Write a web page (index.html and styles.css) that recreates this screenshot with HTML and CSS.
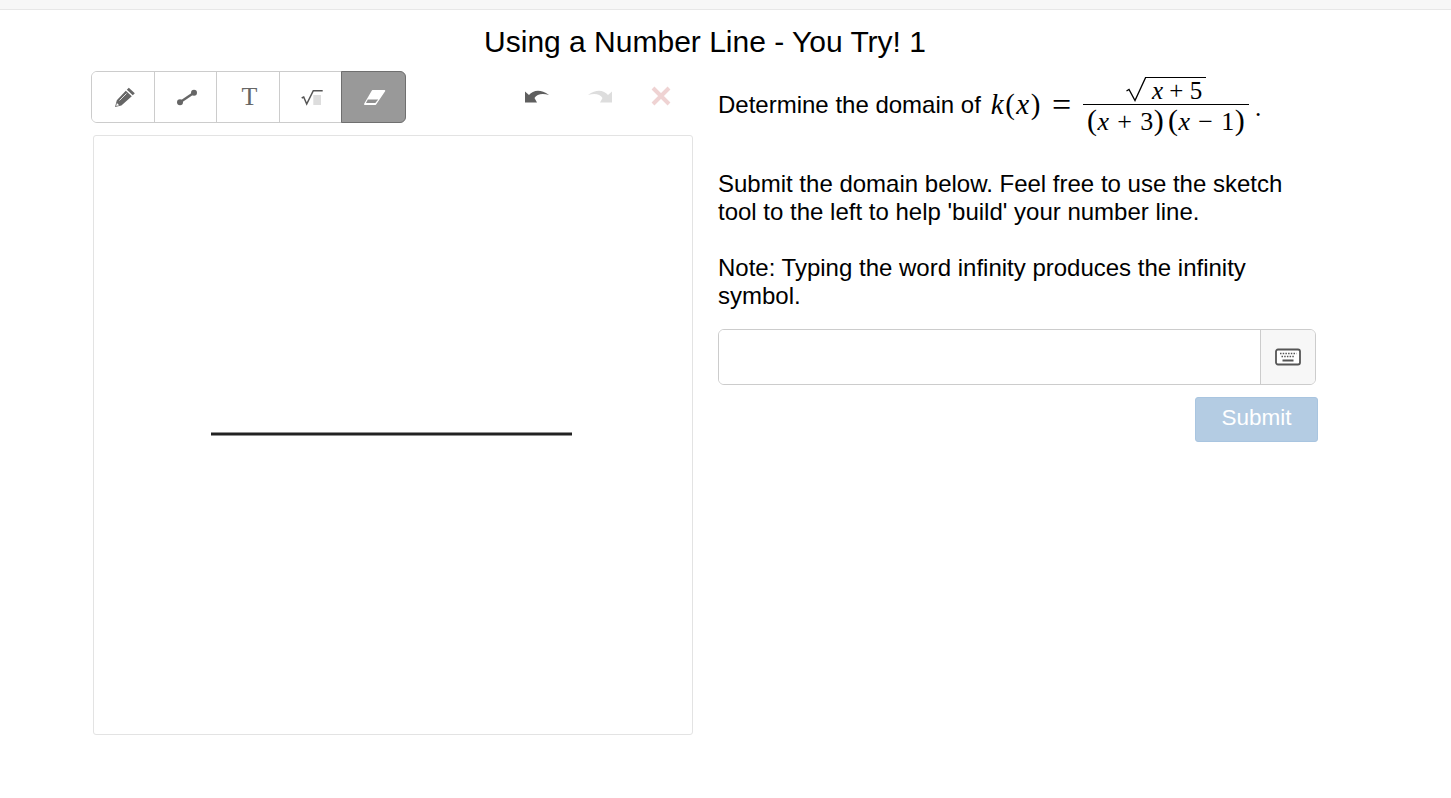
FILE: index.html
```html
<!DOCTYPE html>
<html lang="en">
<head>
<meta charset="utf-8">
<title>Using a Number Line - You Try! 1</title>
<link rel="stylesheet" href="styles.css">
</head>
<body>
<div class="topbar"></div>
<main class="page">
  <h1 class="title">Using a Number Line - You Try! 1</h1>
  <div class="columns">
    <section class="left">
      <div class="toolrow">
        <div class="tools">
          <button class="tool"><svg width="24" height="24" viewBox="0 0 24 24"><path fill="#666" d="M15.800 2.700 L21.800 8.300 L19.800 10.300 L13.800 4.700 Z M12.800 5.700 L18.800 11.300 L8.400 20.500 L2 22 L3.800 15.300 Z"/><path fill="#fff" d="M3.900 18 L6.200 20.300 L3.200 21 Z"/><path stroke="#fff" stroke-width=".8" d="M6.500 15.500 L13.500 8.500"/></svg></button>
          <button class="tool"><svg width="24" height="24" viewBox="0 0 24 24"><path stroke="#666" stroke-width="2.300" d="M5 17.300 L19 7.700"/><circle cx="5" cy="17.300" r="3" fill="#666"/><circle cx="19" cy="7.700" r="3" fill="#666"/></svg></button>
          <button class="tool"><span class="tee">T</span></button>
          <button class="tool"><svg width="24" height="24" viewBox="0 0 24 24"><path fill="none" stroke="#555" stroke-width="1.500" d="M1.700 13 L3.700 12 L6.700 19 L13.300 5.700 L22.700 5.700"/><rect x="13.300" y="10" width="7.700" height="10" fill="#ddd"/></svg></button>
          <button class="tool active"><svg width="24" height="24" viewBox="0 0 24 24"><path fill="#fff" stroke="#fff" stroke-width="1.500" stroke-linejoin="round" d="M9.500 5.800 L21.500 5.800 L12.500 19.200 L1.800 19.200 Z"/><path fill="#8f8f8f" d="M4.800 14.500 L15.200 14.500 L12.300 18 L3 18 Z"/></svg></button>
        </div>
        <div class="actions">
          <svg class="arrow" width="24" height="15" viewBox="0 -1 24 15"><path fill="#5f5f5f" d="M0 1.500 L4 5 C8 0.500 15 -1.500 24 5 C18 3 12 3.500 9.500 8 L12 12.500 L0 12.500 Z"/></svg>
          <svg class="arrow redo" width="24" height="15" viewBox="0 -1 24 15"><path fill="#ddd" d="M0 1.500 L4 5 C8 0.500 15 -1.500 24 5 C18 3 12 3.500 9.500 8 L12 12.500 L0 12.500 Z"/></svg>
          <svg width="20" height="20" viewBox="0 0 20 20"><path stroke="#efd3d3" stroke-width="4" d="M2 2 L18 18 M18 2 L2 18"/></svg>
        </div>
      </div>
      <div class="canvas">
        <svg width="598" height="598" viewBox="0 0 598 598"><line x1="117" y1="298" x2="478" y2="298" stroke="#222" stroke-width="3"/></svg>
      </div>
    </section>
    <section class="right">
      <div class="question">
        <span>Determine the domain of</span>
        <span class="math">
          <span class="fn"><i>k</i><span class="paren">(</span><i>x</i><span class="paren">)</span></span>
          <span class="eq">=</span>
          <span class="frac">
            <span class="num"><svg class="radical" width="20" height="27" viewBox="0 0 20 27"><path fill="none" stroke="#000" stroke-width="1.300" d="M0.500 14 L3 12.500 L9 23.500 L19.600 0.500 L20 0.500"/></svg><span class="radicand"><i>x</i> + 5</span></span>
            <span class="den"><span class="paren">(</span><i>x</i> + 3<span class="paren">)</span><span class="paren second">(</span><i>x</i> − 1<span class="paren">)</span></span>
          </span>
          <span class="dot">.</span>
        </span>
      </div>
      <p class="para first">Submit the domain below. Feel free to use the sketch tool to the left to help 'build' your number line.</p>
      <p class="para">Note: Typing the word infinity produces the infinity symbol.</p>
      <div class="answer">
        <div class="field"></div>
        <div class="kbd"><svg width="26" height="18" viewBox="0 0 26 18"><rect x="1" y="1.500" width="24" height="15" rx="2" fill="#fff" stroke="#555" stroke-width="1.800"/><path stroke="#555" stroke-width="1.500" stroke-dasharray="1.500 1.200" d="M5 5.500 H21.500 M6.500 8.500 H20"/><path stroke="#555" stroke-width="2" d="M7.500 12.500 H18.500"/></svg></div>
      </div>
      <div class="submit-row"><button class="submit">Submit</button></div>
    </section>
  </div>
</main>
</body>
</html>
```
FILE: styles.css
```css
* { box-sizing: border-box; }
html, body { margin: 0; padding: 0; background: #fff; }
body { font-family: "Liberation Sans", Arial, sans-serif; color: #000; height: 798px; overflow: hidden; }
.topbar { height: 10px; background: #f7f7f7; border-bottom: 1px solid #e7e7e7; }
.page { width: 1228px; margin-left: 91px; }
.title { margin: 0; padding-top: 14px; height: 61px; font-size: 30px; line-height: 35px; font-weight: 400; text-align: center; }
.columns { display: flex; }
.left { width: 602px; }
.toolrow { display: flex; justify-content: space-between; height: 52px; }
.tools { display: grid; grid-template-columns: 63px 62px 63px 62px 63px; width: 315px; height: 52px; border: 1px solid #ccc; border-radius: 6px; }
.tool { padding: 0 0 0 3px; border: 0; border-right: 1px solid #ccc; background: #fff; display: flex; align-items: center; justify-content: center; }
.tool:first-child { border-radius: 5px 0 0 5px; }
.tool:last-child { border-right: 0; }
.tool.active { margin: -1px -1px -1px -1px; background: #999; border: 1px solid #6f6f6f; border-radius: 0 6px 6px 0; }
.tee { font-family: "Liberation Serif", serif; font-size: 26px; line-height: 1; color: #666; }
.actions { display: flex; align-items: center; gap: 39px; padding: 0 22px 2px 0; }
.redo { transform: scaleX(-1); }
.canvas { width: 600px; height: 600px; margin: 12px 0 0 2px; border: 1px solid #e3e3e3; border-radius: 3px; }
.canvas svg { display: block; }
.right { margin-left: 25px; width: 600px; font-size: 24px; line-height: 28px; }
.question { display: flex; align-items: center; height: 67px; white-space: nowrap; }
.math { display: flex; align-items: center; font-family: "Liberation Serif", serif; margin-left: 10px; font-size: 25px; }
.fn { font-size: 29px; letter-spacing: 1.500px; line-height: 30px; margin-top: -2px; }
.paren { font-style: normal; }
.eq { margin: 0 12px 0 10px; font-size: 34px; line-height: 30px; }
.frac { display: flex; flex-direction: column; align-items: center; width: 166px; height: 60px; }
.num { display: flex; align-items: flex-end; justify-content: center; height: 30px; border-bottom: 1px solid #000; width: 100%; }
.radical { display: block; }
.radicand { border-top: 1px solid #000; padding: 0 4px 1px 6px; line-height: 25px; }
.den { display: block; height: 29px; font-size: 26px; line-height: 29px; letter-spacing: .4px; word-spacing: 1px; }
.den .paren { font-size: 30px; }
.second { margin-left: 4px; }
.dot { margin: 6px 0 0 6px; }
.para { margin: 0; width: 590px; }
.para.first { margin-top: 32px; margin-bottom: 28px; }
.answer { display: flex; width: 598px; height: 56px; margin-top: 19px; border: 1px solid #ccc; border-radius: 6px; overflow: hidden; }
.field { flex: 1; background: #fff; }
.kbd { width: 55px; background: #f7f7f7; border-left: 1px solid #ccc; display: flex; align-items: center; justify-content: center; }
.submit-row { display: flex; width: 600px; justify-content: flex-end; margin-top: 12px; }
.submit { width: 123px; height: 45px; padding: 0 0 3px; background: #b4cce3; border: 1px solid #a9c5e0; border-radius: 3px; color: #fff; font: 22.500px "Liberation Sans", Arial, sans-serif; }
```
